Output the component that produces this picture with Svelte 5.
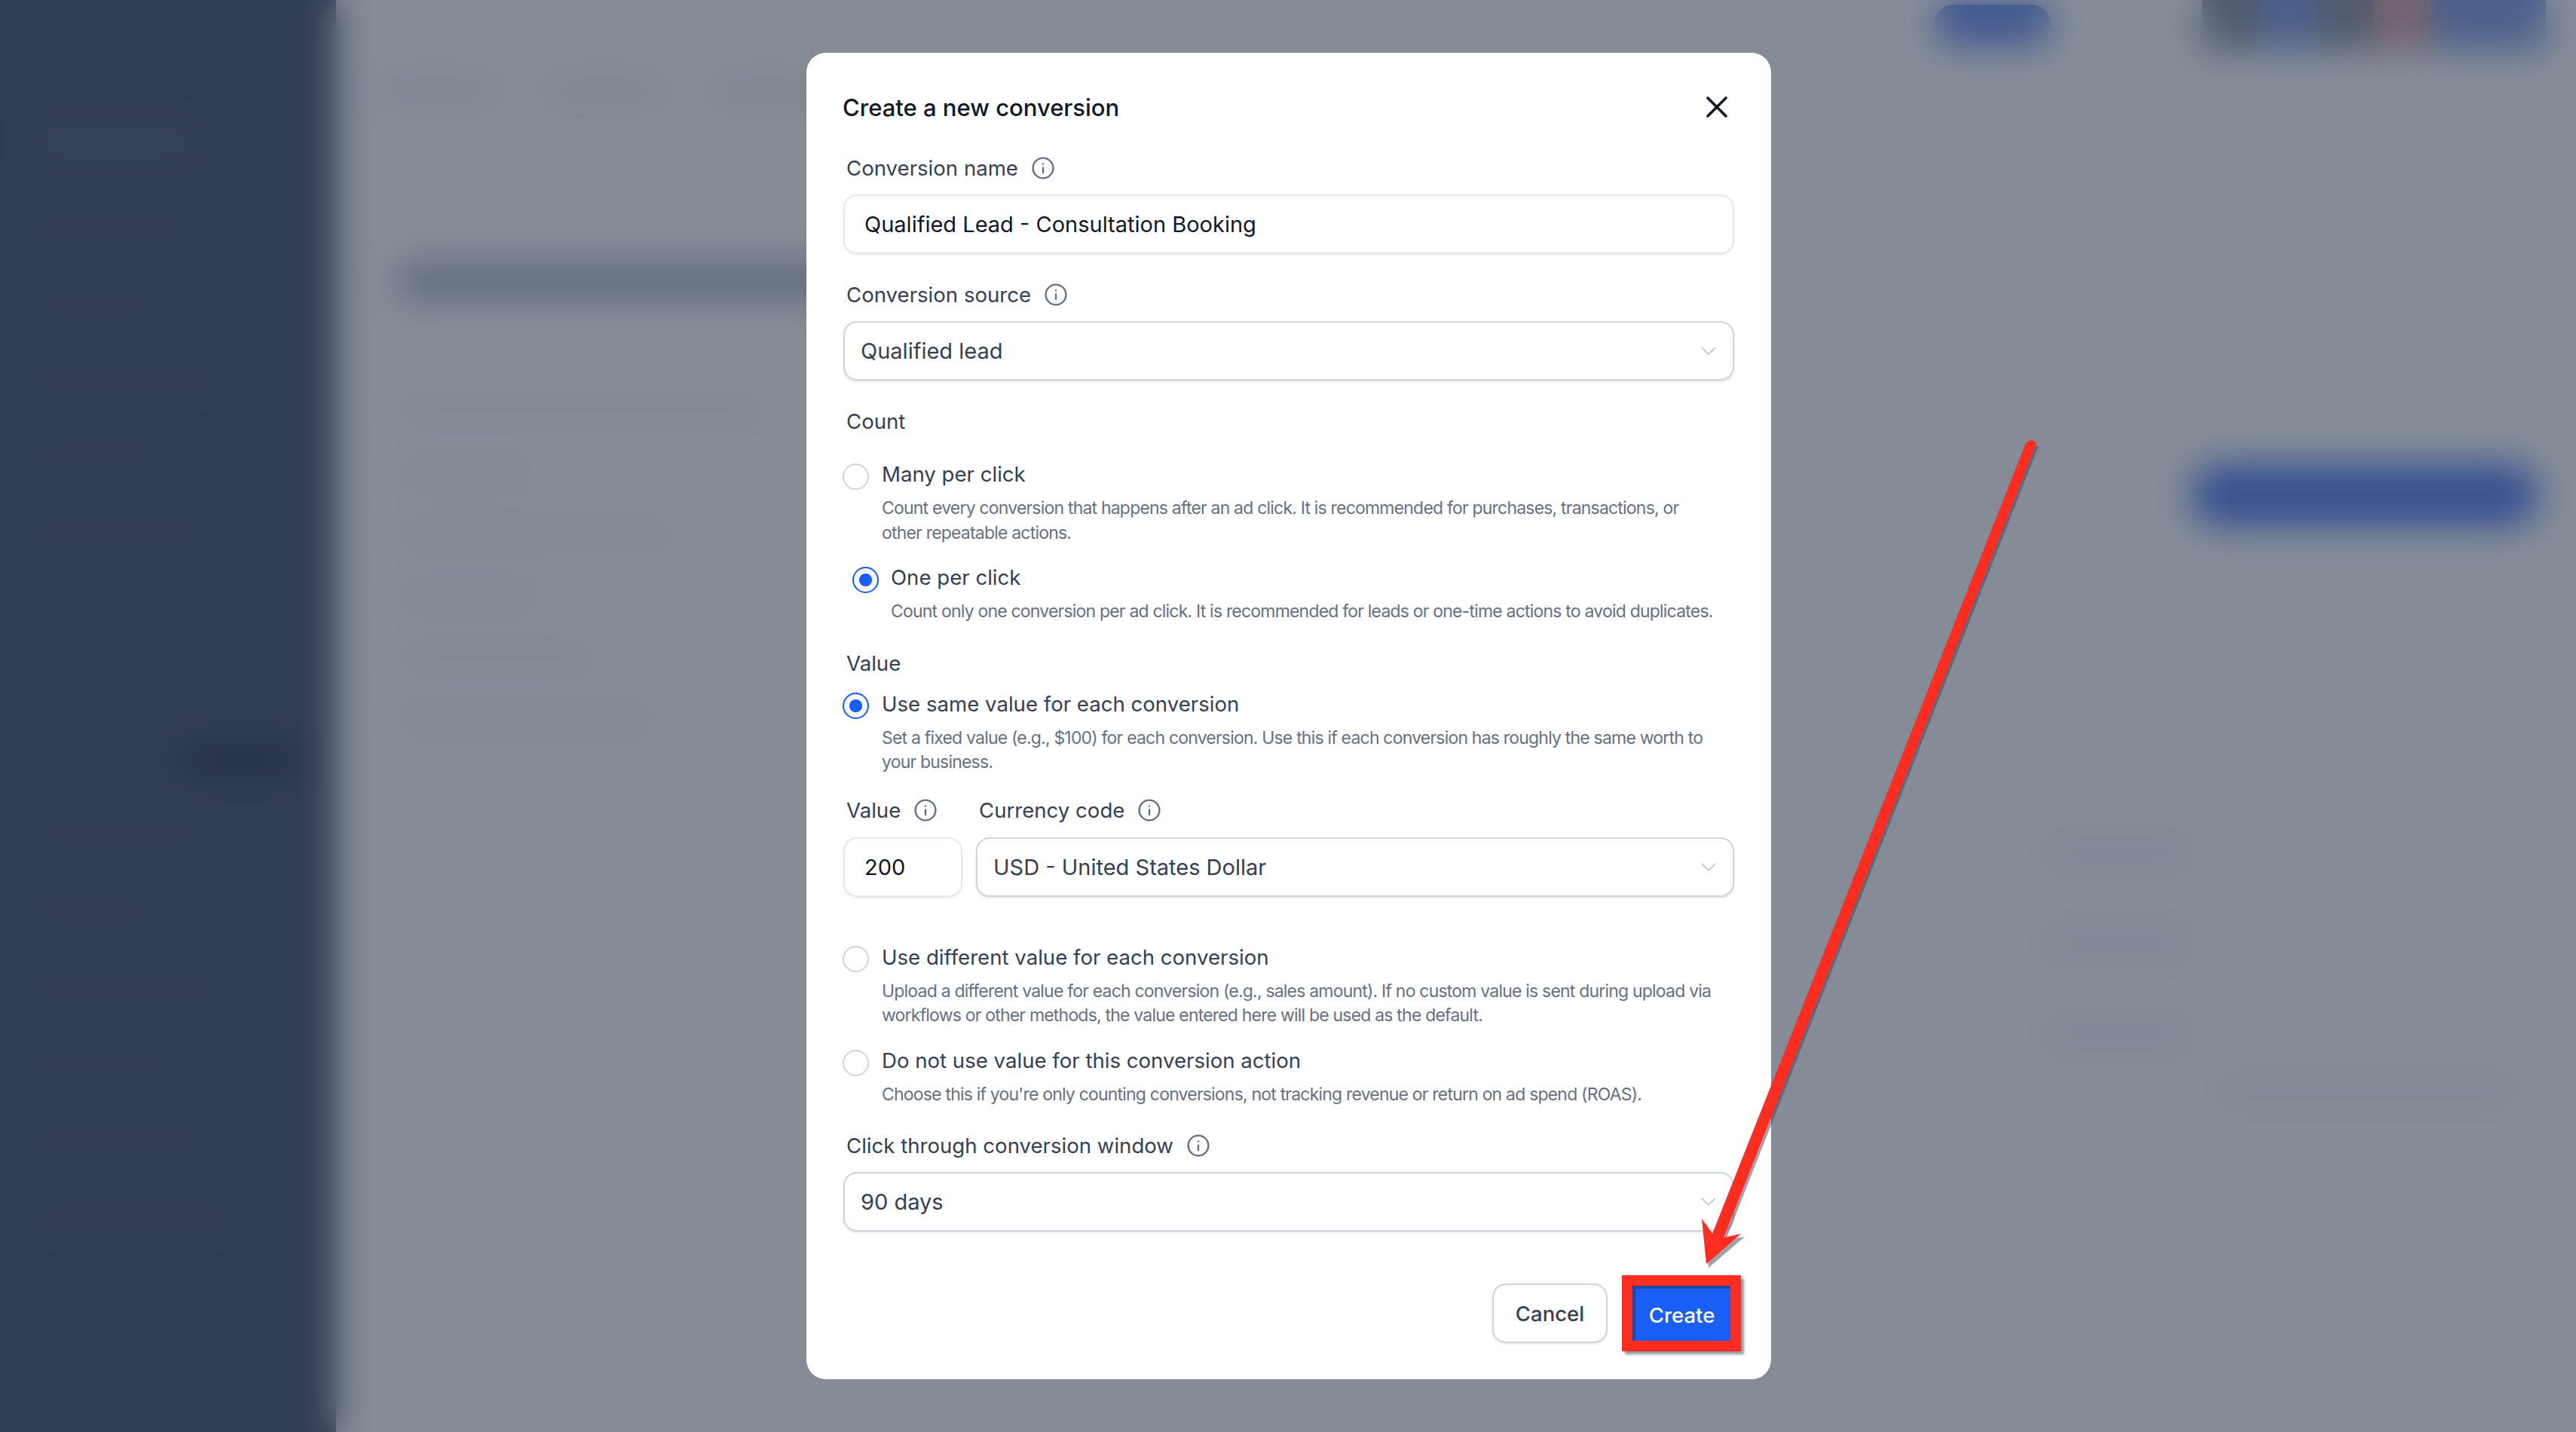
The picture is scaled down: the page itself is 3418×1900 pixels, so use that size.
<script>
  const sideRows = [210, 170, 260, 180, 240];
  const lowerRows = [220, 170, 260, 190, 240, 280];
  const leftRows = [480, 180, 360, 190, 260, 340];
  const midRows = [0, 1, 2];
</script>

{#snippet info()}
  <svg class="info" viewBox="0 0 30 30" aria-hidden="true">
    <circle cx="15" cy="15" r="13.4" />
    <path d="M15 21v-6.6M15 9.4v.2" />
  </svg>
{/snippet}

{#snippet chevron()}
  <svg class="chev" viewBox="0 0 20 11" aria-hidden="true">
    <path d="M1 1l9 9 9-9" />
  </svg>
{/snippet}

<div class="page">
  <aside class="side">
    <div class="side-logo"></div>
    <div class="side-group">
      {#each sideRows as w}
        <div class="side-row" style="width:{w}px"></div>
      {/each}
    </div>
    <div class="side-active"></div>
    <div class="side-group lower">
      {#each lowerRows as w}
        <div class="side-row" style="width:{w}px"></div>
      {/each}
    </div>
  </aside>
  <main class="main">
    <header class="top">
      <div class="top-pill"></div>
      <div class="avatars">
        <span class="av grey"></span><span class="av blue"></span><span class="av grey"></span><span class="av red"></span><span class="av blue"></span><span class="av blue"></span>
      </div>
    </header>
    <nav class="tabs"><span></span><span></span><span></span><span></span><span></span></nav>
    <div class="heading"></div>
    <div class="body">
      <div class="left-col">
        {#each leftRows as w}
          <div class="l-row" style="width:{w}px"></div>
        {/each}
      </div>
      <div class="right-col">
        <div class="cta"></div>
        <div class="mid-list">
          {#each midRows as r}
            <div class="m-row"></div>
          {/each}
        </div>
        <div class="foot-row"></div>
      </div>
    </div>
  </main>
</div>

<div class="scrim">
  <div class="modal">
    <div class="head">
      <h2>Create a new conversion</h2>
      <svg class="close" viewBox="0 0 28 28" aria-hidden="true"><path d="M2 2l24 24M26 2L2 26" /></svg>
    </div>

    <div class="label first">Conversion name {@render info()}</div>
    <div class="field input">Qualified Lead - Consultation Booking</div>

    <div class="label">Conversion source {@render info()}</div>
    <div class="field select"><span>Qualified lead</span>{@render chevron()}</div>

    <div class="label">Count</div>
    <div class="option o1">
      <span class="radio"></span>
      <div class="o-title">Many per click</div>
      <p>Count every conversion that happens after an ad click. It is recommended for purchases, transactions, or other repeatable actions.</p>
    </div>
    <div class="option o2 shifted">
      <span class="radio on"></span>
      <div class="o-title">One per click</div>
      <p>Count only one conversion per ad click. It is recommended for leads or one-time actions to avoid duplicates.</p>
    </div>

    <div class="label value-head">Value</div>
    <div class="option o3">
      <span class="radio on"></span>
      <div class="o-title">Use same value for each conversion</div>
      <p>Set a fixed value (e.g., $100) for each conversion. Use this if each conversion has roughly the same worth to your business.</p>
    </div>

    <div class="pair">
      <div class="pair-val">
        <div class="label tight">Value {@render info()}</div>
        <div class="field input num">200</div>
      </div>
      <div class="pair-cur">
        <div class="label tight cur">Currency code {@render info()}</div>
        <div class="field select"><span>USD - United States Dollar</span>{@render chevron()}</div>
      </div>
    </div>

    <div class="option o4">
      <span class="radio"></span>
      <div class="o-title">Use different value for each conversion</div>
      <p>Upload a different value for each conversion (e.g., sales amount). If no custom value is sent during upload via workflows or other methods, the value entered here will be used as the default.</p>
    </div>
    <div class="option o5">
      <span class="radio"></span>
      <div class="o-title">Do not use value for this conversion action</div>
      <p>Choose this if you're only counting conversions, not tracking revenue or return on ad spend (ROAS).</p>
    </div>

    <div class="label window">Click through conversion window {@render info()}</div>
    <div class="field select"><span>90 days</span>{@render chevron()}</div>

    <div class="actions">
      <button class="btn cancel">Cancel</button>
      <div class="mark"><button class="btn create">Create</button></div>
    </div>
  </div>
</div>

<svg class="arrow" viewBox="0 0 3418 1900" aria-hidden="true">
  <path class="a-shadow" d="M2705 592 L2290 1645 L2315 1641 L2267 1682 L2262 1622 L2276 1642 L2691 592 Z" />
  <path class="a-fill" d="M2687 590 Q2694 579 2702 588 L2287 1642 L2310 1637 L2264 1677 L2258 1617 L2272 1637 Z" />
</svg>

<style>
  :global(html), :global(body) {
    margin: 0;
    width: 3418px;
    height: 1900px;
    overflow: hidden;
    background: #fff;
  }

  .page {
    width: 3418px;
    height: 1900px;
    display: flex;
    background: #fff;
    overflow: hidden;
  }

  .side {
    width: 446px;
    flex: none;
    background: #2f3b56;
    padding: 50px 0 0 40px;
    box-sizing: border-box;
    display: flex;
    flex-direction: column;
  }
  .side-logo { width: 220px; height: 28px; background: #47536c; margin-top: 124px; flex: none; }
  .side-group { display: flex; flex-direction: column; gap: 86px; margin-top: 90px; flex: none; }
  .side-group.lower { margin-top: 70px; }
  .side-row { height: 16px; background: #3a4661; }
  .side-active { width: 150px; height: 42px; background: #101b35; margin: 271px 0 0 205px; flex: none; }

  .main { flex: 1; min-width: 0; display: flex; flex-direction: column; background: #fff; }

  .top { height: 72px; display: flex; align-items: flex-start; justify-content: flex-end; padding-right: 40px; flex: none; }
  .top-pill { width: 156px; height: 54px; border-radius: 27px; background: #4f7bec; margin: 6px 200px 0 0; }
  .avatars { display: flex; }
  .av { width: 76px; height: 66px; display: block; }
  .av.grey { background: #7c8695; }
  .av.blue { background: #7094e0; }
  .av.red { background: #d89aa0; }

  .tabs { display: flex; gap: 70px; padding: 36px 0 0 60px; flex: none; }
  .tabs span { width: 150px; height: 24px; background: #dfe2e6; }

  .heading { width: 1300px; height: 44px; background: #a0a7b1; margin: 219px 0 3px 84px; flex: none; }

  .body { display: flex; justify-content: space-between; flex: 1; min-height: 0; }
  .left-col { padding: 135px 0 0 84px; display: flex; flex-direction: column; gap: 58px; }
  .l-row { height: 24px; background: #eceef1; }

  .right-col {
    width: 720px;
    padding-right: 46px;
    box-sizing: border-box;
    display: flex;
    flex-direction: column;
    align-items: flex-end;
    padding-top: 217px;
  }
  .cta { width: 462px; height: 84px; border-radius: 42px; background: #3c6ef0; flex: none; margin-right: 4px; }
  .mid-list { align-self: flex-start; display: flex; flex-direction: column; gap: 84px; margin: 415px 0 0 16px; }
  .m-row { width: 190px; height: 36px; background: #eceef1; }
  .foot-row { width: 400px; height: 26px; background: #eceef1; margin: 45px 30px 0 0; }

  .scrim {
    position: fixed;
    inset: 0;
    padding-left: 2px;
    box-sizing: border-box;
    background: rgba(52, 64, 84, .6);
    -webkit-backdrop-filter: blur(24px);
    backdrop-filter: blur(24px);
    display: flex;
    align-items: center;
    justify-content: center;
  }

  .modal {
    width: 1280px;
    height: 1760px;
    box-sizing: border-box;
    background: #fff;
    border-radius: 26px;
    padding: 49px 49px;
    display: flex;
    flex-direction: column;
    font-family: Inter, "Liberation Sans", sans-serif;
    color: #344054;
  }
  .modal > * { flex-shrink: 0; }

  .head { display: flex; align-items: center; justify-content: space-between; height: 48px; margin-left: -1px; }
  h2 { margin: 0; font-size: 31px; font-weight: 500; line-height: 48px; color: #101828; }
  .close { width: 28px; height: 28px; margin: -2px 9px 0 0; fill: none; stroke: #101828; stroke-width: 3.6; stroke-linecap: round; }

  .label {
    display: flex;
    align-items: center;
    gap: 18px;
    height: 40px;
    margin: 34px 0 15px 4px;
    font-size: 27.6px;
    font-weight: 400;
    color: #344054;
    white-space: nowrap;
  }
  .label.first { margin-top: 36px; }
  .label.value-head { margin-top: 32px; }
  .label.window { margin-top: 32px; margin-bottom: 15px; }
  .label.tight { margin: 0 0 16px 4px; }
  .label.cur { margin-left: 4px; }

  .info { width: 30px; height: 30px; flex: none; fill: none; stroke: #667085; stroke-width: 2.4; stroke-linecap: round; }

  .field {
    height: 79px;
    box-sizing: border-box;
    border-radius: 18px;
    background: #fff;
    display: flex;
    align-items: center;
    font-size: 29px;
    white-space: nowrap;
  }
  .input {
    border: 2px solid #e6e8ec;
    box-shadow: 0 2px 3px rgba(16, 24, 40, .08);
    padding-left: 26px;
    color: #101828;
  }
  .select {
    border: 2.5px solid #d0d5dd;
    box-shadow: 0 2px 3px rgba(16, 24, 40, .1);
    padding: 0 22px 0 21px;
    justify-content: space-between;
    color: #344054;
  }
  .chev { width: 20px; height: 11px; fill: none; stroke: #c5c9d2; stroke-width: 1.8; }

  .option {
    display: grid;
    grid-template-columns: 35px 1fr;
    column-gap: 17px;
    margin-left: -1px;
  }
  .shifted { margin-left: 12px; column-gap: 16px; }
  .o1 { margin-top: 15px; }
  .o2 { margin-top: 23px; }
  .o3 { margin-top: -1px; }
  .o4 { margin-top: 60px; }
  .o5 { margin-top: 23px; }

  .radio {
    grid-row: 1 / span 2;
    width: 35px;
    height: 35px;
    box-sizing: border-box;
    border: 2px solid #d0d5dd;
    border-radius: 50%;
    margin-top: 6px;
    background: #fff;
  }
  .o3 .radio, .o4 .radio { margin-top: 5px; }
  .radio.on {
    border: 2.5px solid #155eef;
    background: radial-gradient(circle, #155eef 0 8px, #f6f6f8 9px);
  }

  .o-title { font-size: 27.6px; line-height: 40px; color: #344054; white-space: nowrap; }
  p {
    margin: 9px 0 0;
    max-width: 1108px;
    font-size: 23px;
    line-height: 32.5px;
    color: #667085;
    letter-spacing: -.8px;
  }

  .pair { display: flex; gap: 18px; margin-top: 27px; }
  .pair-val { width: 158px; flex: none; }
  .pair-cur { flex: 1; min-width: 0; }

  .actions { display: flex; justify-content: flex-end; align-items: center; margin-top: 58px; margin-right: -9px; gap: 19px; }
  .btn {
    font-family: inherit;
    font-size: 27.5px;
    font-weight: 500;
    border-radius: 18px;
    padding: 0;
    cursor: pointer;
  }
  .cancel {
    width: 153px;
    height: 79px;
    background: #fff;
    border: 2.5px solid #d0d5dd;
    color: #344054;
    box-shadow: 0 2px 3px rgba(16, 24, 40, .08);
  }
  .mark {
    border: 14px solid #ff2d20;
    box-shadow: 4px 4px 3px rgba(60, 70, 90, .55);
    display: flex;
  }
  .create {
    width: 130px;
    height: 73px;
    padding-right: 3px;
    background: #1a5ff5;
    color: #fff;
    border: 0;
    border-radius: 0;
    border-top: 4px solid #1b47a5;
    border-left: 4px solid #1b47a5;
    box-sizing: border-box;
  }

  .arrow { position: fixed; inset: 0; width: 3418px; height: 1900px; pointer-events: none; }
  .a-fill { fill: #ff2d20; }
  .a-shadow { fill: rgba(60, 70, 90, .5); }
</style>
